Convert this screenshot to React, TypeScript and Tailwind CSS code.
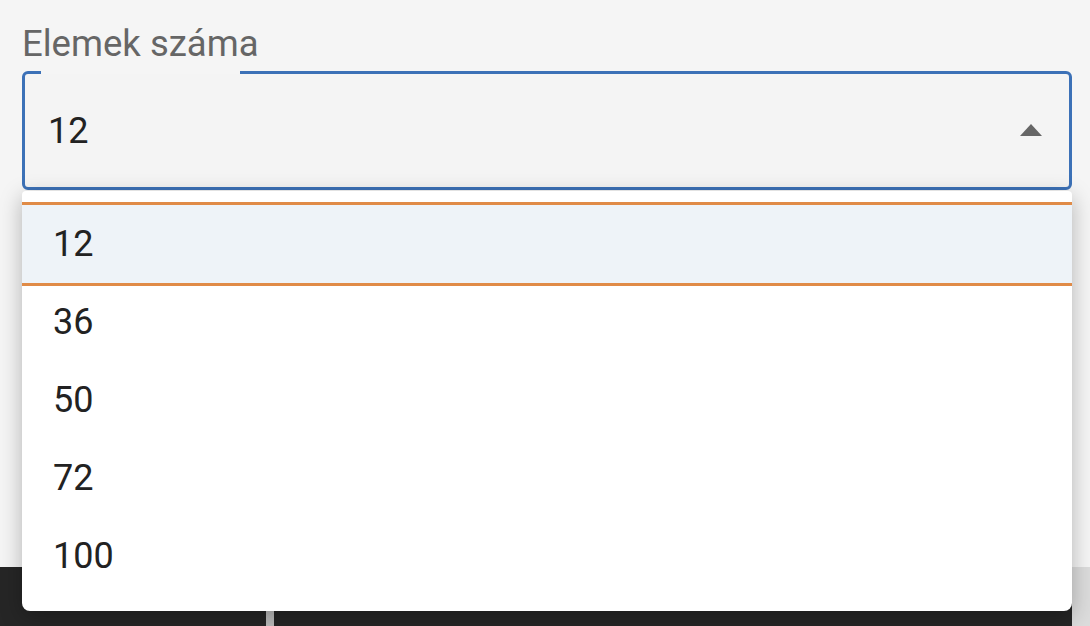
const options = ['12', '36', '50', '72', '100'];

export default function App() {
  const selected = '12';
  return (
    <div
      className="flex h-[626px] w-[1090px] flex-col overflow-hidden bg-[#f5f5f5] text-[#222]"
      style={{ fontFamily: 'Roboto, "Noto Sans", sans-serif' }}
    >
      <div className="pl-[22px] pr-[18px] pt-[24px]">
        <div className="h-[40px] text-[36.5px] leading-[40px] text-[#666]">Elemek száma</div>
        <div className="relative mt-[7px]">
          <div className="flex h-[119px] items-center justify-between rounded-[6px] border-[3px] border-[#3c71b7] bg-[#f4f4f4] pl-[23px] pr-[27px]">
            <span className="text-[36px] leading-none">{selected}</span>
            <svg width="22" height="12" viewBox="0 0 22 12" className="mt-[-1px]">
              <path d="M11 0 L22 12 L0 12 Z" fill="#666" />
            </svg>
          </div>
          <span className="absolute left-[19px] top-0 h-[3px] w-[199px] bg-[#f5f5f5]" />
          <div className="absolute left-0 right-0 top-[calc(100%+1px)] z-10 rounded-t-[4px] rounded-b-[8px] bg-white pb-[16px] pt-[14px] shadow-[0_6px_22px_rgba(0,0,0,0.28)]">
            {options.map((o) => (
              <div
                key={o}
                className={`flex h-[78px] items-center pl-[31px] text-[36px] leading-none ${
                  o === selected
                    ? 'relative z-10 bg-[#eef3f8] shadow-[0_-3px_0_#e08b47,0_3px_0_#e08b47]'
                    : ''
                }`}
              >
                {o}
              </div>
            ))}
          </div>
        </div>
      </div>
      <div className="mt-auto flex h-[59px]">
        <div className="w-[266px] bg-[#262626]" />
        <div className="w-[8px] bg-[#bdbdbd]" />
        <div className="w-[798px] bg-[#262626]" />
        <div className="flex-1 bg-[#dcdcdc]" />
      </div>
    </div>
  );
}
